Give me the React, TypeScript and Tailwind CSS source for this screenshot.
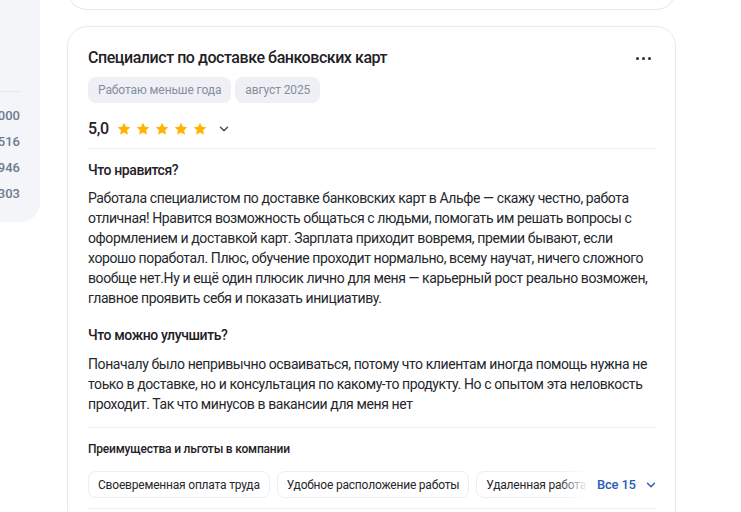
import React from 'react';

const Star = () => (
  <svg width="16" height="16" viewBox="0 0 24 24" fill="#ffb400">
    <path d="M12 2.5l2.9 6.2 6.6.7-4.9 4.5 1.4 6.6L12 17.2l-5.9 3.3 1.4-6.6-4.9-4.5 6.6-.7z" />
  </svg>
);

const Chevron = ({ className }: { className?: string }) => (
  <svg className={className} width="14" height="14" viewBox="0 0 24 24" fill="none" stroke="currentColor" strokeWidth="2.5" strokeLinecap="round" strokeLinejoin="round">
    <path d="M6 9l6 6 6-6" />
  </svg>
);

const perks = ['Своевременная оплата труда', 'Удобное расположение работы', 'Удаленная работа'];

export default function App() {
  return (
    <div className="flex items-start bg-white h-[512px] overflow-hidden text-[#1f2126]" style={{ fontFamily: 'Roboto, "Noto Sans", sans-serif' }}>
      <aside className="w-[40px] shrink-0 h-[222px] bg-[#f4f5f9] rounded-br-[20px] flex flex-col">
        <div className="h-[92px] shrink-0 border-b border-[#e6e8ee] mr-[20px]" />
        <div className="flex flex-col items-end pr-[20px] pt-[14px] gap-[6px] text-[13px] font-medium text-[#6d7a8f] leading-[20px]">
          <span>000</span>
          <span>516</span>
          <span>946</span>
          <span>303</span>
        </div>
      </aside>

      <main className="ml-[27px] w-[609px] shrink-0 flex flex-col">
        <div className="h-[40px] shrink-0 -mt-[30px] border border-t-0 border-[#e8eaef] rounded-b-[20px]" />

        <section className="shrink-0 mt-[16px] border border-[#e8eaef] rounded-[20px] px-[20px] pt-[20px] pb-[20px]">
          <div className="flex items-center justify-between">
            <h2 className="text-[16px] leading-[22px] font-medium tracking-[-0.45px]">Специалист по доставке банковских карт</h2>
            <div className="flex gap-[3px] mr-[4px]">
              <span className="w-[3px] h-[3px] rounded-full bg-[#2b2d33]" />
              <span className="w-[3px] h-[3px] rounded-full bg-[#2b2d33]" />
              <span className="w-[3px] h-[3px] rounded-full bg-[#2b2d33]" />
            </div>
          </div>

          <div className="flex gap-[4px] mt-[8px]">
            <span className="h-[26px] px-[10px] flex items-center rounded-[8px] bg-[#eef0f5] text-[12px] tracking-[-0.1px] text-[#858e9e]">Работаю меньше года</span>
            <span className="h-[26px] px-[10px] flex items-center rounded-[8px] bg-[#eef0f5] text-[12px] tracking-[-0.1px] text-[#858e9e]">август 2025</span>
          </div>

          <div className="flex items-center mt-[15px] pb-[8px] border-b border-[#eceef2]">
            <span className="text-[16px] leading-[22px] font-medium tracking-[-0.3px]">5,0</span>
            <div className="flex gap-[3px] ml-[7px]">
              <Star /><Star /><Star /><Star /><Star />
            </div>
            <Chevron className="ml-[9px] text-[#4a4d55]" />
          </div>

          <h3 className="mt-[11px] text-[14px] leading-[20px] font-medium tracking-[-0.4px]">Что нравится?</h3>
          <p className="mt-[8px] text-[14px] leading-[20px] tracking-[-0.4px] text-[#25272c]">
            Работала специалистом по доставке банковских карт в Альфе — скажу честно, работа отличная! Нравится возможность общаться с людьми, помогать им решать вопросы с оформлением и доставкой карт. Зарплата приходит вовремя, премии бывают, если хорошо поработал. Плюс, обучение проходит нормально, всему научат, ничего сложного вообще нет.Ну и ещё один плюсик лично для меня — карьерный рост реально возможен, главное проявить себя и показать инициативу.
          </p>

          <h3 className="mt-[17px] text-[14px] leading-[20px] font-medium tracking-[-0.4px]">Что можно улучшить?</h3>
          <p className="mt-[9px] text-[14px] leading-[20px] tracking-[-0.4px] text-[#25272c]">
            Поначалу было непривычно осваиваться, потому что клиентам иногда помощь нужна не тоько в доставке, но и консультация по какому-то продукту. Но с опытом эта неловкость проходит. Так что минусов в вакансии для меня нет
          </p>

          <div className="mt-[13px] border-t border-[#eceef2] pt-[12px]">
            <h4 className="text-[12px] leading-[18px] font-medium tracking-[-0.2px]">Преимущества и льготы в компании</h4>
            <div className="mt-[13px] flex items-center">
              <div className="relative flex gap-[7px] w-[500px] shrink-0 overflow-hidden">
                {perks.map((p) => (
                  <span key={p} className="shrink-0 h-[27px] px-[9px] flex items-center rounded-[8px] border border-[#eceef2] bg-white text-[12px] tracking-[-0.2px] text-[#25272c] whitespace-nowrap">{p}</span>
                ))}
                <div className="absolute right-0 top-0 h-full w-[30px] bg-gradient-to-r from-white/0 to-white" />
              </div>
              <button className="ml-[9px] shrink-0 whitespace-nowrap flex items-center gap-[8px] text-[13px] font-medium tracking-[-0.2px] text-[#2b5db8]">
                Все 15
                <Chevron className="text-[#2b5db8]" />
              </button>
            </div>
          </div>
          <div className="mt-[10px] border-t border-[#eceef2]" />
        </section>
      </main>
    </div>
  );
}
